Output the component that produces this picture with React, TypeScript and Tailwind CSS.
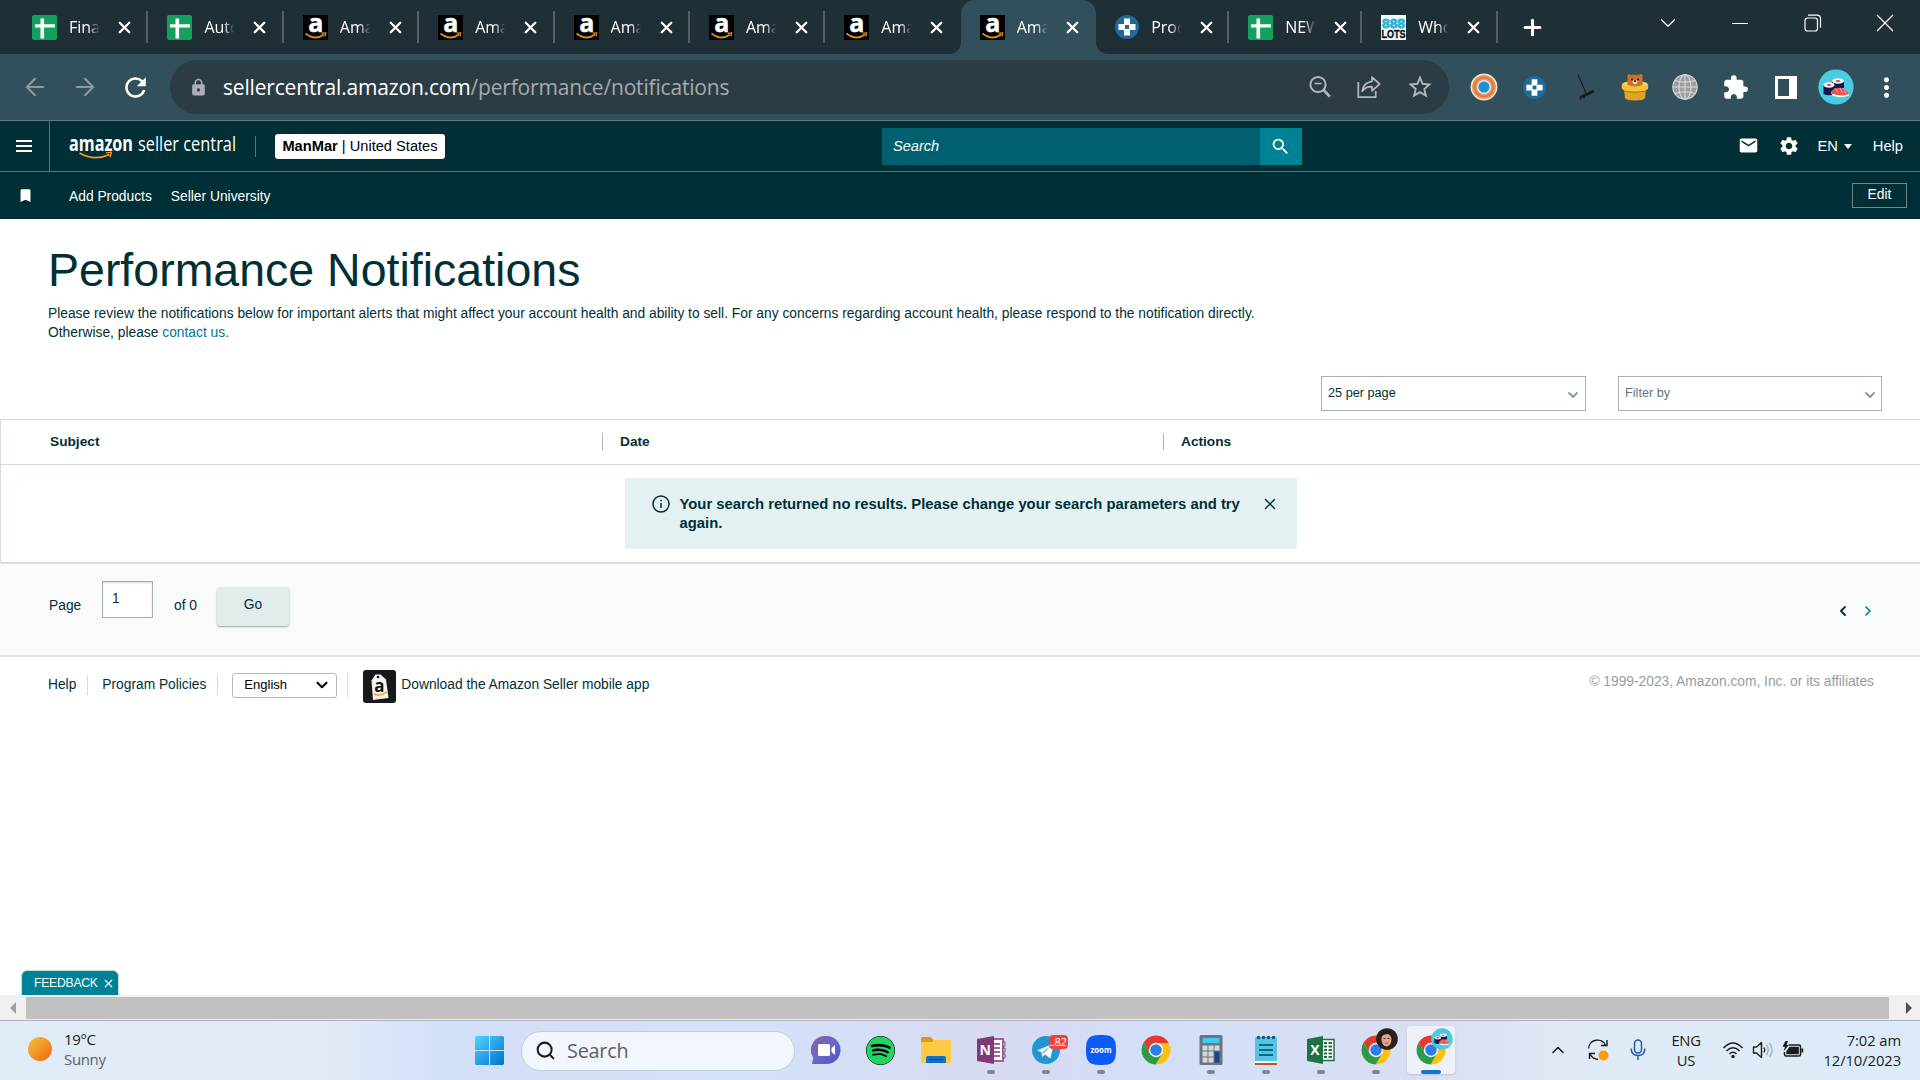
import React from 'react';
import { ArrowLeft, ArrowRight, ChevronDown, ChevronLeft, ChevronRight, ChevronUp, Plus, Search, X } from 'lucide-react';
import { FaSpotify } from 'react-icons/fa';
import { MdBookmark, MdEmail, MdExtension, MdLock, MdMoreVert, MdRefresh, MdSearch, MdSettings, MdStarOutline } from 'react-icons/md';

type Favicon = 'sheets' | 'amazon' | 'prod' | 'lots';

const TABS: { title: string; icon: Favicon; active?: boolean; noLine?: boolean; narrow?: boolean }[] = [
  { title: 'Fina', icon: 'sheets' },
  { title: 'Auto', icon: 'sheets' },
  { title: 'Ama', icon: 'amazon' },
  { title: 'Ama', icon: 'amazon' },
  { title: 'Ama', icon: 'amazon' },
  { title: 'Ama', icon: 'amazon' },
  { title: 'Ama', icon: 'amazon', noLine: true },
  { title: 'Ama', icon: 'amazon', active: true, noLine: true },
  { title: 'Prod', icon: 'prod', narrow: true },
  { title: 'NEW', icon: 'sheets', narrow: true },
  { title: 'Who', icon: 'lots' },
];

// --- Favicons and toolbar drawings ---
const CrossBadge = ({ size }: { size: number }) => (
  <svg width={size} height={size} viewBox="0 0 24 24">
    <circle cx="12" cy="12" r="12" fill="#21699a" />
    <path d="M9 3.500h6V9h5.500v6H15v5.500H9V15H3.500V9H9z" fill="#fff" />
    <rect x="10" y="10" width="4" height="4" fill="#21699a" />
  </svg>
);

const TabIcon = ({ kind }: { kind: Favicon }) => {
  if (kind === 'sheets') {
    return (
      <svg width="25" height="25" viewBox="0 0 25 25">
        <rect width="25" height="25" rx="2" fill="#12a05c" />
        <path d="M8.500 3.500h3.600v5.700h10.700v3.200H12.100v11H8.500v-11H3V9.200h5.500z" fill="#fff" />
      </svg>
    );
  }
  if (kind === 'amazon') {
    return (
      <svg width="25" height="25" viewBox="0 0 25 25">
        <rect width="25" height="25" fill="#000" />
        <text x="12.800" y="16.800" textAnchor="middle" fontFamily="Open Sans, sans-serif" fontWeight="700" fontSize="25" fill="#fff" stroke="#fff" strokeWidth=".5">a</text>
        <path d="M2.500 18.500Q12 26 21 19.500" stroke="#d98a1a" strokeWidth="2" fill="none" />
        <path d="M18.500 18.200l4.200-.3-.8 3.600" stroke="#d98a1a" strokeWidth="1.300" fill="none" />
      </svg>
    );
  }
  if (kind === 'prod') return <CrossBadge size={24} />;
  return (
    <svg width="25" height="25" viewBox="0 0 25 25">
      <rect width="25" height="25" fill="#f4f8f9" />
      <text x="12.500" y="12.600" textAnchor="middle" textLength="23" lengthAdjust="spacingAndGlyphs" fontFamily="Liberation Sans, sans-serif" fontWeight="700" fontSize="13" fill="#30b4d4" stroke="#30b4d4" strokeWidth=".8">888</text>
      <text x="12.500" y="22.500" textAnchor="middle" textLength="24" lengthAdjust="spacingAndGlyphs" fontFamily="Liberation Sans, sans-serif" fontWeight="700" fontSize="10.500" fill="#111" stroke="#111" strokeWidth=".4">LOTS</text>
    </svg>
  );
};

const ZoomOutIcon = () => (
  <svg width="24" height="26" viewBox="0 0 24 26" fill="none" stroke="#b3b8bc" strokeWidth="2">
    <circle cx="10" cy="10.500" r="7.600" />
    <path d="M15.600 16l6.200 6.600" strokeWidth="2.600" />
    <path d="M6.500 9.500h7" strokeWidth="1.600" />
  </svg>
);

const ShareIcon = () => (
  <svg width="26" height="26" viewBox="0 0 26 26" fill="none" stroke="#b3b8bc" strokeWidth="1.700">
    <path d="M2.300 8v15.200h17.400V17" />
    <path d="M16 3.200l7.600 6.800-7.600 6.800v-4.200c-4.600-.2-7.600 1.400-9.800 4.600.8-5.200 4-9 9.800-9.800z" strokeLinejoin="round" />
  </svg>
);

const TargetIcon = () => (
  <svg width="28" height="28" viewBox="0 0 28 28">
    <circle cx="14" cy="14" r="13.400" fill="#f4e8de" />
    <circle cx="14" cy="14" r="12" fill="#ee9a62" />
    <circle cx="14" cy="14" r="9.500" fill="none" stroke="#e07a38" strokeWidth="2" />
    <circle cx="14" cy="14" r="7" fill="#d5e8f3" />
    <circle cx="14" cy="14" r="5.500" fill="#1d8fd6" />
  </svg>
);

const BroomIcon = () => (
  <svg width="26" height="28" viewBox="0 0 26 28" stroke="#161b1d" fill="none">
    <path d="M6 1.500l8.400 19.500" strokeWidth="1.100" />
    <path d="M8 24.500l14-6.500" strokeWidth="2.600" />
    <path d="M8.500 25v2M12 24v1.600" strokeWidth="1.300" />
  </svg>
);

const BearPotIcon = () => (
  <svg width="28" height="28" viewBox="0 0 28 28">
    <ellipse cx="14" cy="11.500" rx="13" ry="3.500" fill="#fbd25a" />
    <path d="M6.500 2.500Q7.500.2 9.800 1.700h8.400Q20.500.2 21.500 2.500V12q-7.500 3-15 0z" fill="#c8722a" />
    <circle cx="11" cy="6.500" r="1" fill="#21140b" />
    <circle cx="17" cy="6.500" r="1" fill="#21140b" />
    <ellipse cx="14" cy="9" rx="2.500" ry="2.200" fill="#f4dfc2" />
    <circle cx="14" cy="8.100" r="1.100" fill="#21140b" />
    <path d="M3 16h22l-1 9q-1 2.500-10 2.500T4 25z" fill="#e0a422" />
    <path d="M.8 11.500q6 2.300 13.200 2.300t13.200-2.300v4q-1 3-13.200 3t-13.200-3z" fill="#f6c235" />
    <path d="M3 18.200q11 2.200 22 0" stroke="#b07c10" strokeWidth="1" fill="none" />
  </svg>
);

const GlobeIcon = () => (
  <svg width="26" height="26" viewBox="0 0 26 26" fill="none" stroke="#d8dbdc" strokeWidth="1.100">
    <circle cx="13" cy="13" r="12.200" fill="#9b9d9e" />
    <ellipse cx="13" cy="13" rx="6" ry="12.200" />
    <path d="M13 .8v24.400M.8 13h24.400M3 6.500q10 3.500 20 0M3 19.500q10-3.500 20 0" />
  </svg>
);

const SushiAvatar = ({ size }: { size: number }) => (
  <svg width={size} height={size} viewBox="0 0 36 36">
    <circle cx="18" cy="18" r="17.600" fill="#4bcbe1" />
    <path d="M14 12v7h12v-7z" fill="#12184a" />
    <ellipse cx="20" cy="12" rx="6" ry="2.800" fill="#f3f3f5" />
    <ellipse cx="20" cy="12" rx="2.300" ry="1.100" fill="#e2483f" />
    <path d="M5.500 16v9q5.500 2.500 11 0v-9z" fill="#12184a" />
    <ellipse cx="11" cy="16" rx="5.500" ry="2.700" fill="#f3f3f5" />
    <ellipse cx="11" cy="16" rx="2.200" ry="1.100" fill="#e2483f" />
    <path d="M13 24q8 4 18 1v1.500q-9 3.500-16.500 0z" fill="#fff" />
    <path d="M12.500 23.500c3-6 13-7.500 18.500 1.500-5 2-12.500 2-18.500-1.500z" fill="#ef5350" />
    <path d="M18 20l2 4M22 19l2.500 5M26 20.500l2 4" stroke="#ff9a94" strokeWidth=".9" />
  </svg>
);

// --- Taskbar drawings ---
const ChromeIcon = () => (
  <svg width="32" height="32" viewBox="0 0 32 32">
    <path d="M3.600 8.500A14.500 14.500 0 0 1 28.700 9H16L9.940 19.500z" fill="#e33b2e" />
    <path d="M28.700 9A14.500 14.500 0 0 1 15.700 30.500L22.060 19.500 16 9z" fill="#fdc10d" />
    <path d="M15.700 30.500A14.500 14.500 0 0 1 3.600 8.500L9.940 19.500h12.120z" fill="#2a9b47" />
    <circle cx="16" cy="16" r="7.200" fill="#fff" />
    <circle cx="16" cy="16" r="5.800" fill="#2f7de9" />
  </svg>
);

const ChatIcon = () => (
  <svg width="32" height="32" viewBox="0 0 32 32">
    <defs>
      <linearGradient id="chat" x1="0" y1="0" x2="1" y2="1">
        <stop offset="0" stopColor="#8a5fa8" />
        <stop offset=".5" stopColor="#6a67c4" />
        <stop offset="1" stopColor="#4f52c8" />
      </linearGradient>
    </defs>
    <path d="M16.500 2a14 14 0 1 1 0 28H2l1.200-6.500A14 14 0 0 1 16.500 2z" fill="url(#chat)" />
    <rect x="8" y="10" width="12" height="12" rx="1.500" fill="#fff" />
    <path d="M21.500 14l3.500-3v10l-3.500-3z" fill="#fff" />
  </svg>
);

const FolderIcon = () => (
  <svg width="32" height="32" viewBox="0 0 32 32">
    <path d="M1 4.500Q1 3 2.500 3h8l3 3v4H1z" fill="#dd9a08" />
    <path d="M1 8h11l2.500-2H30q1 0 1 1v21q0 1-1 1H2q-1 0-1-1z" fill="#fdcb45" />
    <path d="M6 29v-5q0-2 2-2h16q2 0 2 2v5z" fill="#0f73c8" />
    <path d="M9.500 25.500h13" stroke="#084a8a" strokeWidth="1.200" />
  </svg>
);

const OneNoteIcon = () => (
  <svg width="32" height="32" viewBox="0 0 32 32">
    <path d="M16 5h12v22H16z" fill="#fff" stroke="#80397b" strokeWidth="1.500" />
    <path d="M28 8h2v4h-2zM28 14h2v4h-2zM28 20h2v4h-2z" fill="#fff" stroke="#80397b" strokeWidth="1" />
    <path d="M19 10h6M19 14h6M19 18h6M19 22h6" stroke="#80397b" strokeWidth="1.500" />
    <path d="M2 5l17-3v28L2 27z" fill="#80397b" />
    <text x="10.300" y="21.300" textAnchor="middle" fontFamily="Open Sans, sans-serif" fontWeight="700" fontSize="14" fill="#fff">N</text>
  </svg>
);

const TelegramIcon = () => (
  <svg width="32" height="32" viewBox="0 0 32 32">
    <circle cx="16" cy="16" r="14" fill="#2297d4" />
    <path d="M7 16.500l16.500-7-3 15-5.500-4-2.800 2.600-.8-5z" fill="#fff" />
    <path d="M11.500 18l9-6-6.500 8z" fill="#9cc8e4" />
  </svg>
);

const ZoomIcon = () => (
  <svg width="32" height="32" viewBox="0 0 32 32">
    <path d="M16 1c12 0 15 3 15 15s-3 15-15 15S1 28 1 16 4 1 16 1z" fill="#0b5cf6" />
    <text x="16" y="18.800" textAnchor="middle" textLength="21" lengthAdjust="spacingAndGlyphs" fontFamily="Open Sans, sans-serif" fontWeight="700" fontSize="8.500" fill="#fff">zoom</text>
  </svg>
);

const CalculatorIcon = () => (
  <svg width="32" height="32" viewBox="0 0 32 32">
    <rect x="4.500" y="1" width="23" height="30" rx="1.500" fill="#6b7480" />
    <rect x="7.500" y="4" width="17" height="5" fill="#3ccbf4" />
    <path d="M7.500 11.500h5v5h-5zM13.500 11.500h5v5h-5zM19.500 11.500h5v5h-5zM7.500 17.500h5v5h-5zM13.500 17.500h5v5h-5zM7.500 23.500h5v5h-5zM13.500 23.500h5v5h-5z" fill="#d4d8dc" />
    <path d="M19.500 17.500h5v11h-5z" fill="#144a8c" />
  </svg>
);

const NotepadIcon = () => (
  <svg width="32" height="32" viewBox="0 0 32 32">
    <rect x="5" y="3" width="22" height="26" rx="1.500" fill="#54c4e0" />
    <path d="M5 27h22v2H5z" fill="#fff" />
    <path d="M5 29h22v2H5z" fill="#b05a1c" />
    <path d="M9 11h14M9 16h14M9 21h14" stroke="#0a6a90" strokeWidth="2" />
    <g fill="#0a6080">
      <circle cx="8.500" cy="3.500" r="1.800" />
      <circle cx="13.500" cy="3.500" r="1.800" />
      <circle cx="18.500" cy="3.500" r="1.800" />
      <circle cx="23.500" cy="3.500" r="1.800" />
    </g>
  </svg>
);

const ExcelIcon = () => (
  <svg width="32" height="32" viewBox="0 0 32 32">
    <path d="M17 5.500h12v21H17z" fill="#fff" stroke="#1f7244" strokeWidth="1.500" />
    <path d="M19 9h3M19 12.500h3M19 16h3M19 19.500h3M19 23h3M23.500 9H27M23.500 12.500H27M23.500 16H27M23.500 19.500H27M23.500 23H27" stroke="#1f7244" strokeWidth="2" />
    <path d="M2 5l16-3v28L2 27z" fill="#1f7244" />
    <text x="10" y="21.300" textAnchor="middle" fontFamily="Open Sans, sans-serif" fontWeight="700" fontSize="14" fill="#fff">X</text>
  </svg>
);

const PortraitBadge = () => (
  <svg width="22" height="22" viewBox="0 0 22 22">
    <circle cx="11" cy="11" r="10.800" fill="#2a2020" />
    <ellipse cx="10.500" cy="11.500" rx="5" ry="7" fill="#d9a68d" />
    <path d="M4.500 9q2-6.500 8-5.500 4.500 2 4 8-2-5-5-5.500T4.500 9z" fill="#211817" />
    <path d="M7.500 10.500h2M11.500 10.500h2" stroke="#3a2420" strokeWidth="1" />
    <path d="M9 15h3" stroke="#b0524e" strokeWidth="1" />
  </svg>
);

const APPS: { name: string; icon: React.ReactNode; badge?: React.ReactNode; running?: boolean; active?: boolean }[] = [
  { name: 'chat', icon: <ChatIcon /> },
  { name: 'spotify', icon: <FaSpotify size={29} className="rounded-full bg-black text-[#1ed760]" /> },
  { name: 'files', icon: <FolderIcon /> },
  { name: 'onenote', icon: <OneNoteIcon />, running: true },
  {
    name: 'telegram',
    icon: <TelegramIcon />,
    badge: <span className="absolute left-[27px] top-[9px] h-[14px] w-[19px] rounded bg-[#f8403a] text-center font-['Open_Sans',sans-serif] text-[11px] leading-[14px] tracking-[-0.300px] text-white">..82</span>,
    running: true,
  },
  { name: 'zoom', icon: <ZoomIcon />, running: true },
  { name: 'chrome', icon: <ChromeIcon /> },
  { name: 'calculator', icon: <CalculatorIcon />, running: true },
  { name: 'notepad', icon: <NotepadIcon />, running: true },
  { name: 'excel', icon: <ExcelIcon />, running: true },
  { name: 'chrome-1', icon: <ChromeIcon />, badge: <span className="absolute left-[24px] top-[2px]"><PortraitBadge /></span>, running: true },
  { name: 'chrome-2', icon: <ChromeIcon />, badge: <span className="absolute left-[24px] top-[2px]"><SushiAvatar size={22} /></span>, active: true },
];

// --- Browser chrome ---
const TabStrip = () => (
  <div className="flex h-[54px] shrink-0 bg-[#1f2f36] pl-[13px] font-['Open_Sans',sans-serif] text-white">
    {TABS.map((tab, i) => (
      <div key={i} className={`relative flex h-[54px] shrink-0 items-center ${tab.narrow ? 'w-[133px]' : 'w-[135.400px]'} ${tab.active ? 'rounded-t-[14px] bg-[#32505b]' : ''}`}>
        {tab.active && (
          <>
            <svg className="absolute -left-3 bottom-0" width="12" height="12"><path d="M12 0v12H0A12 12 0 0 0 12 0z" fill="#32505b" /></svg>
            <svg className="absolute -right-3 bottom-0" width="12" height="12"><path d="M0 0v12h12A12 12 0 0 1 0 0z" fill="#32505b" /></svg>
          </>
        )}
        <div className={`flex w-[25px] shrink-0 justify-center ${tab.icon === 'prod' ? 'ml-[18px]' : 'ml-[19px]'}`}><TabIcon kind={tab.icon} /></div>
        <span className="ml-[12px] w-[31px] shrink-0 overflow-hidden whitespace-nowrap text-[16px] [mask-image:linear-gradient(to_right,black_62%,transparent_98%)]">{tab.title}</span>
        <X size={19} strokeWidth={3} className="ml-[15px] shrink-0" />
        {!tab.noLine && <div className="ml-auto h-8 w-[2px] shrink-0 bg-[#526067]" />}
      </div>
    ))}
    <div className="flex items-center pl-[22px]"><Plus size={25} strokeWidth={3} /></div>
    <div className="ml-auto flex h-[46px] w-[288px] items-center">
      <div className="flex w-[72px] justify-center"><ChevronDown size={26} strokeWidth={1.100} /></div>
      <div className="flex w-[72px] justify-center"><div className="h-px w-4 bg-white" /></div>
      <div className="flex w-[72px] justify-center pl-[2px]">
        <svg width="18" height="18" viewBox="0 0 18 18" fill="none" stroke="#fff" strokeWidth="1.200">
          <rect x="1" y="4" width="12.500" height="13" rx="2.500" />
          <path d="M4 1.200h9q3.500 0 3.500 3.500v9" />
        </svg>
      </div>
      <div className="flex w-[72px] justify-center pl-[2px]">
        <svg width="18" height="18" viewBox="0 0 18 18" stroke="#fff" strokeWidth="1.200"><path d="M1 1l16 16M17 1L1 17" /></svg>
      </div>
    </div>
  </div>
);

const Toolbar = () => (
  <div className="flex h-[67px] shrink-0 items-center border-b border-[#66777f] bg-[#32505b] text-white">
    <div className="flex w-[170px] items-center pl-[21px]">
      <ArrowLeft size={28} strokeWidth={1.900} className="text-[#8a989f]" />
      <ArrowRight size={28} strokeWidth={1.900} className="ml-[22px] text-[#8a989f]" />
      <MdRefresh size={31} className="ml-[21px]" />
    </div>
    <div className="flex h-[54px] w-[1279px] items-center rounded-full bg-[#2c3c44]">
      <MdLock size={19} className="ml-[19px] text-[#a9aeb7]" />
      <span className="ml-[15px] mt-[2px] whitespace-nowrap font-['Open_Sans',sans-serif] text-[21px] tracking-[-0.180px] text-white">
        sellercentral.amazon.com<span className="text-[#a3abaf]">/performance/notifications</span>
      </span>
      <div className="ml-auto flex items-center gap-[24px] pr-[15px]">
        <ZoomOutIcon />
        <ShareIcon />
        <MdStarOutline size={28} className="text-[#b3b8bc]" />
      </div>
    </div>
    <div className="ml-[10px] flex flex-1 items-center">
      <div className="flex w-[50.300px] justify-center"><TargetIcon /></div>
      <div className="flex w-[50.300px] justify-center"><CrossBadge size={23} /></div>
      <div className="flex w-[50.300px] justify-center"><BroomIcon /></div>
      <div className="flex w-[50.300px] justify-center"><BearPotIcon /></div>
      <div className="flex w-[50.300px] justify-center"><GlobeIcon /></div>
      <div className="flex w-[50.300px] justify-center"><MdExtension size={27} /></div>
      <div className="flex w-[50.300px] justify-center">
        <svg width="22" height="23" viewBox="0 0 22 23"><path d="M0 0h22v23H0zM3 3v17h11V3z" fill="#fff" fillRule="evenodd" /></svg>
      </div>
      <div className="flex w-[50.300px] justify-center"><SushiAvatar size={36} /></div>
      <div className="flex w-[50.300px] justify-center"><MdMoreVert size={31} /></div>
    </div>
  </div>
);

// --- Seller Central page ---
const SellerLogo = () => (
  <svg width="168" height="30" viewBox="0 0 168 30" className="shrink-0">
    <text x="0" y="19.500" textLength="64" lengthAdjust="spacingAndGlyphs" fontFamily="Open Sans, sans-serif" fontWeight="700" fontSize="20.500" fill="#fff">amazon</text>
    <text x="69" y="19.500" textLength="98" lengthAdjust="spacingAndGlyphs" fontFamily="Open Sans, sans-serif" fontSize="20" fill="#fff">seller central</text>
    <path d="M10.500 22q15 8.500 30 1.500" stroke="#f7982c" strokeWidth="1.900" fill="none" />
    <path d="M37 21.800l5.500-.6-1.500 5" stroke="#f7982c" strokeWidth="1.300" fill="none" />
  </svg>
);

const SellerHeader = () => (
  <div className="shrink-0 bg-[#002f36] text-white">
    <div className="flex h-[51px] items-center border-b border-[#56767b]">
      <div className="flex h-full w-[50px] items-center border-r border-[#56767b] pl-4">
        <div className="flex w-4 flex-col gap-[3px]">
          <div className="h-[2px] bg-white" />
          <div className="h-[2px] bg-white" />
          <div className="h-[2px] bg-white" />
        </div>
      </div>
      <div className="ml-[19px]"><SellerLogo /></div>
      <div className="ml-[18px] h-[21px] w-px bg-[#56767b]" />
      <div className="ml-[19px] flex h-[25px] w-[170px] items-center justify-center whitespace-pre rounded-[3px] bg-white pt-px text-[14.650px] text-black">
        <b>ManMar</b> | United States
      </div>
      <div className="ml-[437px] flex h-[37px] w-[420px]">
        <div className="flex w-[378px] items-center bg-[#00606f] pl-[11px] pt-px text-[14.600px] italic">Search</div>
        <div className="flex w-[42px] items-center justify-center bg-[#008296] pr-px"><MdSearch size={21} /></div>
      </div>
      <div className="ml-auto flex items-center pr-[17px] text-[14.700px]">
        <MdEmail size={21} />
        <MdSettings size={22} className="ml-[19px]" />
        <span className="ml-[17px] mt-px">EN</span>
        <div className="ml-[6px] mt-[2px] border-x-[4px] border-t-[5px] border-x-transparent border-t-white" />
        <span className="ml-[21px] mt-px">Help</span>
      </div>
    </div>
    <div className="flex h-[47px] items-center text-[13.800px]">
      <MdBookmark size={17} className="ml-[17px]" />
      <span className="ml-[35px] mt-[3px]">Add Products</span>
      <span className="ml-[19px] mt-[3px]">Seller University</span>
      <div className="ml-auto mr-[13px] flex h-[25px] w-[55px] items-center justify-center border border-[#6f878b] pb-px">Edit</div>
    </div>
  </div>
);

const NotificationsTable = () => (
  <>
    <div className="flex h-[144px] border-y border-l border-[#d3dbdc] bg-white">
      <div className="flex flex-1 flex-col">
        <div className="flex h-[45px] items-center border-b border-[#d3dbdc] pb-px text-[13.700px] font-bold">
          <div className="w-[601px] pl-[49px] pt-px">Subject</div>
          <div className="h-[17px] w-px bg-[#aab7b8]" />
          <div className="w-[560px] pl-[17px] pt-px">Date</div>
          <div className="h-[17px] w-px bg-[#aab7b8]" />
          <div className="pl-[17px] pt-px">Actions</div>
        </div>
        <div className="ml-[624px] mt-[13px] flex h-[71px] w-[672px] bg-[#e3f1f2] pl-[27px] pt-[17px] text-[14.820px] font-bold leading-[19px]">
          <svg width="18" height="18" viewBox="0 0 18 18" fill="none" stroke="#002f36" strokeWidth="1.500" className="shrink-0">
            <circle cx="9" cy="9" r="8" />
            <path d="M9 8v5M9 4.800v1.500" />
          </svg>
          <div className="ml-[9.500px] w-[570px]">Your search returned no results. Please change your search parameters and try again.</div>
          <X size={18} strokeWidth={2} className="ml-[11px] shrink-0" />
        </div>
      </div>
    </div>
    <div className="flex h-[94px] border-b-2 border-t border-[#dfe3e5] bg-[#f8fafb] text-[13.800px]">
      <span className="ml-[49px] mt-[32px] w-[33px]">Page</span>
      <div className="ml-[20px] mt-[17px] h-[37px] w-[51px] border border-[#9fb0b1] bg-white pl-[9px] pt-[7px] shadow-[inset_0_1px_2px_rgba(0,0,0,0.150)]">1</div>
      <span className="ml-[21px] mt-[32px] w-[43px]">of 0</span>
      <div className="mt-[23px] flex h-[39px] w-[72px] justify-center rounded-[3px] bg-[#e3eced] pt-[8px] shadow-[0_1px_2px_rgba(0,0,0,0.350)]">Go</div>
      <div className="ml-auto mr-[44px] mt-[38.500px] flex gap-[9px]">
        <ChevronLeft size={16} strokeWidth={2.800} />
        <ChevronRight size={16} strokeWidth={2.500} className="text-[#008296]" />
      </div>
    </div>
  </>
);

const PageFooter = () => (
  <div className="flex h-[56px] items-center text-[13.780px]">
    <span className="ml-[48px]">Help</span>
    <div className="ml-[11px] h-5 w-px bg-[#d5dbdb]" />
    <span className="ml-[14px]">Program Policies</span>
    <div className="ml-[11px] h-5 w-px bg-[#d5dbdb]" />
    <div className="ml-[14px] flex h-[25px] w-[105px] items-center justify-between rounded-[3px] border border-[#b5b9ba] pl-[11px] pr-[5px] text-[13px] text-black">
      English
      <ChevronDown size={18} strokeWidth={2.800} />
    </div>
    <div className="ml-[10px] h-[25px] w-px bg-[#d5dbdb]" />
    <svg width="33" height="33" viewBox="0 0 33 33" className="ml-[15px] mt-[3px]">
      <rect width="33" height="33" rx="3" fill="#16181a" />
      <path d="M8.500 10.500l4-6h5l5.500 5 2.500 18.500L10 30z" fill="#f3f3f3" />
      <circle cx="15" cy="7" r="1.300" fill="#16181a" />
      <text x="16.500" y="21.500" textAnchor="middle" fontFamily="Open Sans, sans-serif" fontWeight="700" fontSize="17" fill="#111">a</text>
      <path d="M10.800 24q7 2.500 13-2" stroke="#f7982c" strokeWidth="1.500" fill="none" />
    </svg>
    <span className="ml-[5px]">Download the Amazon Seller mobile app</span>
    <span className="ml-auto mr-[46px] mt-[-6px] text-[#989c9e]">© 1999-2023, Amazon.com, Inc. or its affiliates</span>
  </div>
);

// --- Windows taskbar ---
const Taskbar = () => (
  <div className="flex h-[60px] shrink-0 border-t border-[#a9b1bd] bg-[linear-gradient(90deg,#dfebf7_0%,#e1eaf6_17%,#d2e0fa_23%,#d6dff5_30%,#d3e2fa_38%,#d7daf1_52%,#d3dffa_61%,#dadff1_75%,#dfeaf6_82%,#dcebf8_100%)] font-['Open_Sans',sans-serif] text-[#1c1c1c]">
    <div className="flex w-[475px] items-center pb-[3px] pl-[28px]">
      <div className="h-6 w-6 rounded-full bg-linear-to-br from-[#efc038] to-[#f1640c]" />
      <div className="ml-[12px] text-[15px] leading-[20px] tracking-[-0.350px]">
        <div>19°C</div>
        <div className="text-[#5b6168]">Sunny</div>
      </div>
    </div>
    <div className="flex items-center">
      <svg width="29" height="29" viewBox="0 0 29 29">
        <defs>
          <linearGradient id="win" x1="0" y1="0" x2="1" y2="1">
            <stop offset="0" stopColor="#4fd4ff" />
            <stop offset="1" stopColor="#0072cf" />
          </linearGradient>
        </defs>
        <path d="M1 0h13v14H0V1zM15 0h13l1 1v13H15zM0 15h14v14H1l-1-1zM15 15h14v13l-1 1H15z" fill="url(#win)" />
      </svg>
      <div className="ml-[17px] flex h-[40px] w-[274px] items-center rounded-full border border-[#c3cde0] bg-[#f2f6fe] pl-[13px]">
        <Search size={21} strokeWidth={2.300} />
        <span className="ml-[11px] text-[19.800px] tracking-[-0.200px] text-[#5c5f66]">Search</span>
      </div>
    </div>
    <div className="ml-[6.500px] flex gap-[7px] pt-[5px]">
      {APPS.map(app => (
        <div key={app.name} className={`relative flex h-[48px] w-[48px] items-center justify-center rounded ${app.active ? 'bg-[#eef1f9] shadow-sm' : ''}`}>
          {app.icon}
          {app.badge}
          {app.running && <span className="absolute bottom-0 left-5 h-1 w-2 rounded-full bg-[#7f858f]" />}
          {app.active && <span className="absolute bottom-0 left-[14px] h-1 w-5 rounded-full bg-[#0b78d6]" />}
        </div>
      ))}
    </div>
    <div className="ml-auto flex items-center pb-[2px] pr-[19px]">
      <ChevronUp size={20} strokeWidth={1.900} />
      <svg width="22" height="22" viewBox="0 0 22 22" fill="none" stroke="#1c1c1c" strokeWidth="1.400" className="ml-[19px]">
        <path d="M1.500 9.500a9 9 0 0 1 17-3.500M20 1v5.500h-6M2.500 20v-5.500h5.500M3 15q2.500 5 8 5.500" />
        <circle cx="16.500" cy="16.500" r="5" fill="#fa9a0c" stroke="none" />
      </svg>
      <svg width="16" height="22" viewBox="0 0 16 22" fill="none" stroke="#1f5bb0" strokeWidth="1.500" className="ml-[21px]">
        <rect x="4.500" y="1" width="7" height="13" rx="3.500" />
        <path d="M1.200 9.500q0 7 6.800 7t6.800-7M8 16.500V21" />
      </svg>
      <div className="ml-[25px] w-[30px] text-center text-[14.800px] leading-[20px] tracking-[-0.300px]">
        <div>ENG</div>
        <div>US</div>
      </div>
      <svg width="22" height="18" viewBox="0 0 22 18" fill="none" stroke="#1c1c1c" strokeWidth="1.500" className="ml-[21px]">
        <path d="M1.500 7q9.500-10 19 0M4.500 10q6.500-6.500 13 0M7.500 13q3.500-3.500 7 0" />
        <circle cx="11" cy="15.500" r="1.700" fill="#1c1c1c" stroke="none" />
      </svg>
      <svg width="22" height="18" viewBox="0 0 22 18" fill="none" stroke="#1c1c1c" strokeWidth="1.400" className="ml-[8px]">
        <path d="M1.500 6h3l5-4.500v15l-5-4.500h-3z" strokeLinejoin="round" />
        <path d="M12 6.500q1.500 2.500 0 5" />
        <path d="M14.500 4q3.500 5 0 10M17.500 2q5 7 0 14" stroke="#a9b2bb" />
      </svg>
      <svg width="22" height="18" viewBox="0 0 22 18" className="ml-[8px]">
        <path d="M6.500 4H17q1.500 0 1.500 1.500v8q0 1.500-1.500 1.500H4q-1.500 0-1.500-1.500V11" fill="none" stroke="#1c1c1c" strokeWidth="1.500" />
        <path d="M7.500 5.800h9.300v7.400H4.300v-3zM19.400 7.500h1.800v4h-1.800zM3.500 0L.5 5.800H3L1.500 10.500 6.800 4H4.500L6 0z" fill="#1c1c1c" />
      </svg>
      <div className="ml-[11px] w-[86px] whitespace-nowrap text-right text-[14.800px] leading-[20px] tracking-[-0.100px]">
        <div>7:02 am</div>
        <div>12/10/2023</div>
      </div>
    </div>
  </div>
);

const App: React.FC = () => {
  return (
    <div className="flex h-[1080px] w-[1920px] flex-col overflow-hidden bg-white font-['Liberation_Sans',Arial,sans-serif] text-[#002f36]">
      <TabStrip />
      <Toolbar />
      <SellerHeader />

      <div className="relative flex-1 overflow-hidden">
        <div className="h-[157px] pl-[48px] pt-[24px]">
          <h1 className="text-[46.500px] leading-[54px]">Performance Notifications</h1>
          <p className="mt-[7px] w-[1215px] text-[13.800px] leading-[19px]">
            Please review the notifications below for important alerts that might affect your account health and ability to sell. For any concerns regarding account health, please respond to the notification directly. Otherwise, please <span className="text-[#007a8c]">contact us.</span>
          </p>
        </div>
        <div className="flex h-[43px] justify-end gap-[32px] pr-[38px] text-[12.700px]">
          <div className="flex h-[35px] w-[265px] items-center justify-between border border-[#a3b3b4] pl-[6px] pr-[4px]">
            25 per page
            <ChevronDown size={16} strokeWidth={2.700} className="mt-[2px] text-[#869a9c]" />
          </div>
          <div className="flex h-[35px] w-[264px] items-center justify-between border border-[#a3b3b4] pl-[6px] pr-[3px] text-[#647679]">
            Filter by
            <ChevronDown size={16} strokeWidth={2.700} className="mt-[2px] text-[#869a9c]" />
          </div>
        </div>
        <NotificationsTable />
        <PageFooter />
        <div className="absolute bottom-0 left-[21px] flex h-[25px] w-[98px] items-center gap-[4px] rounded-t-[6px] border border-b-0 border-[#c8dcdf] bg-[#008296] pl-[12px] text-[12.200px] tracking-[-0.250px] text-white">
          FEEDBACK
          <X size={13} strokeWidth={2.200} className="shrink-0" />
        </div>
      </div>

      <div className="flex h-[25px] shrink-0 items-center bg-[#f0f0f0]">
        <div className="flex w-[26px] justify-center"><div className="border-y-[6px] border-r-[6px] border-y-transparent border-r-[#a0a0a0]" /></div>
        <div className="h-[22px] w-[1863px] bg-[#c1c1c1]" />
        <div className="flex flex-1 justify-center pl-[8px]"><div className="border-y-[6px] border-l-[6px] border-y-transparent border-l-[#505050]" /></div>
      </div>
      <Taskbar />
    </div>
  );
};

export default App;
